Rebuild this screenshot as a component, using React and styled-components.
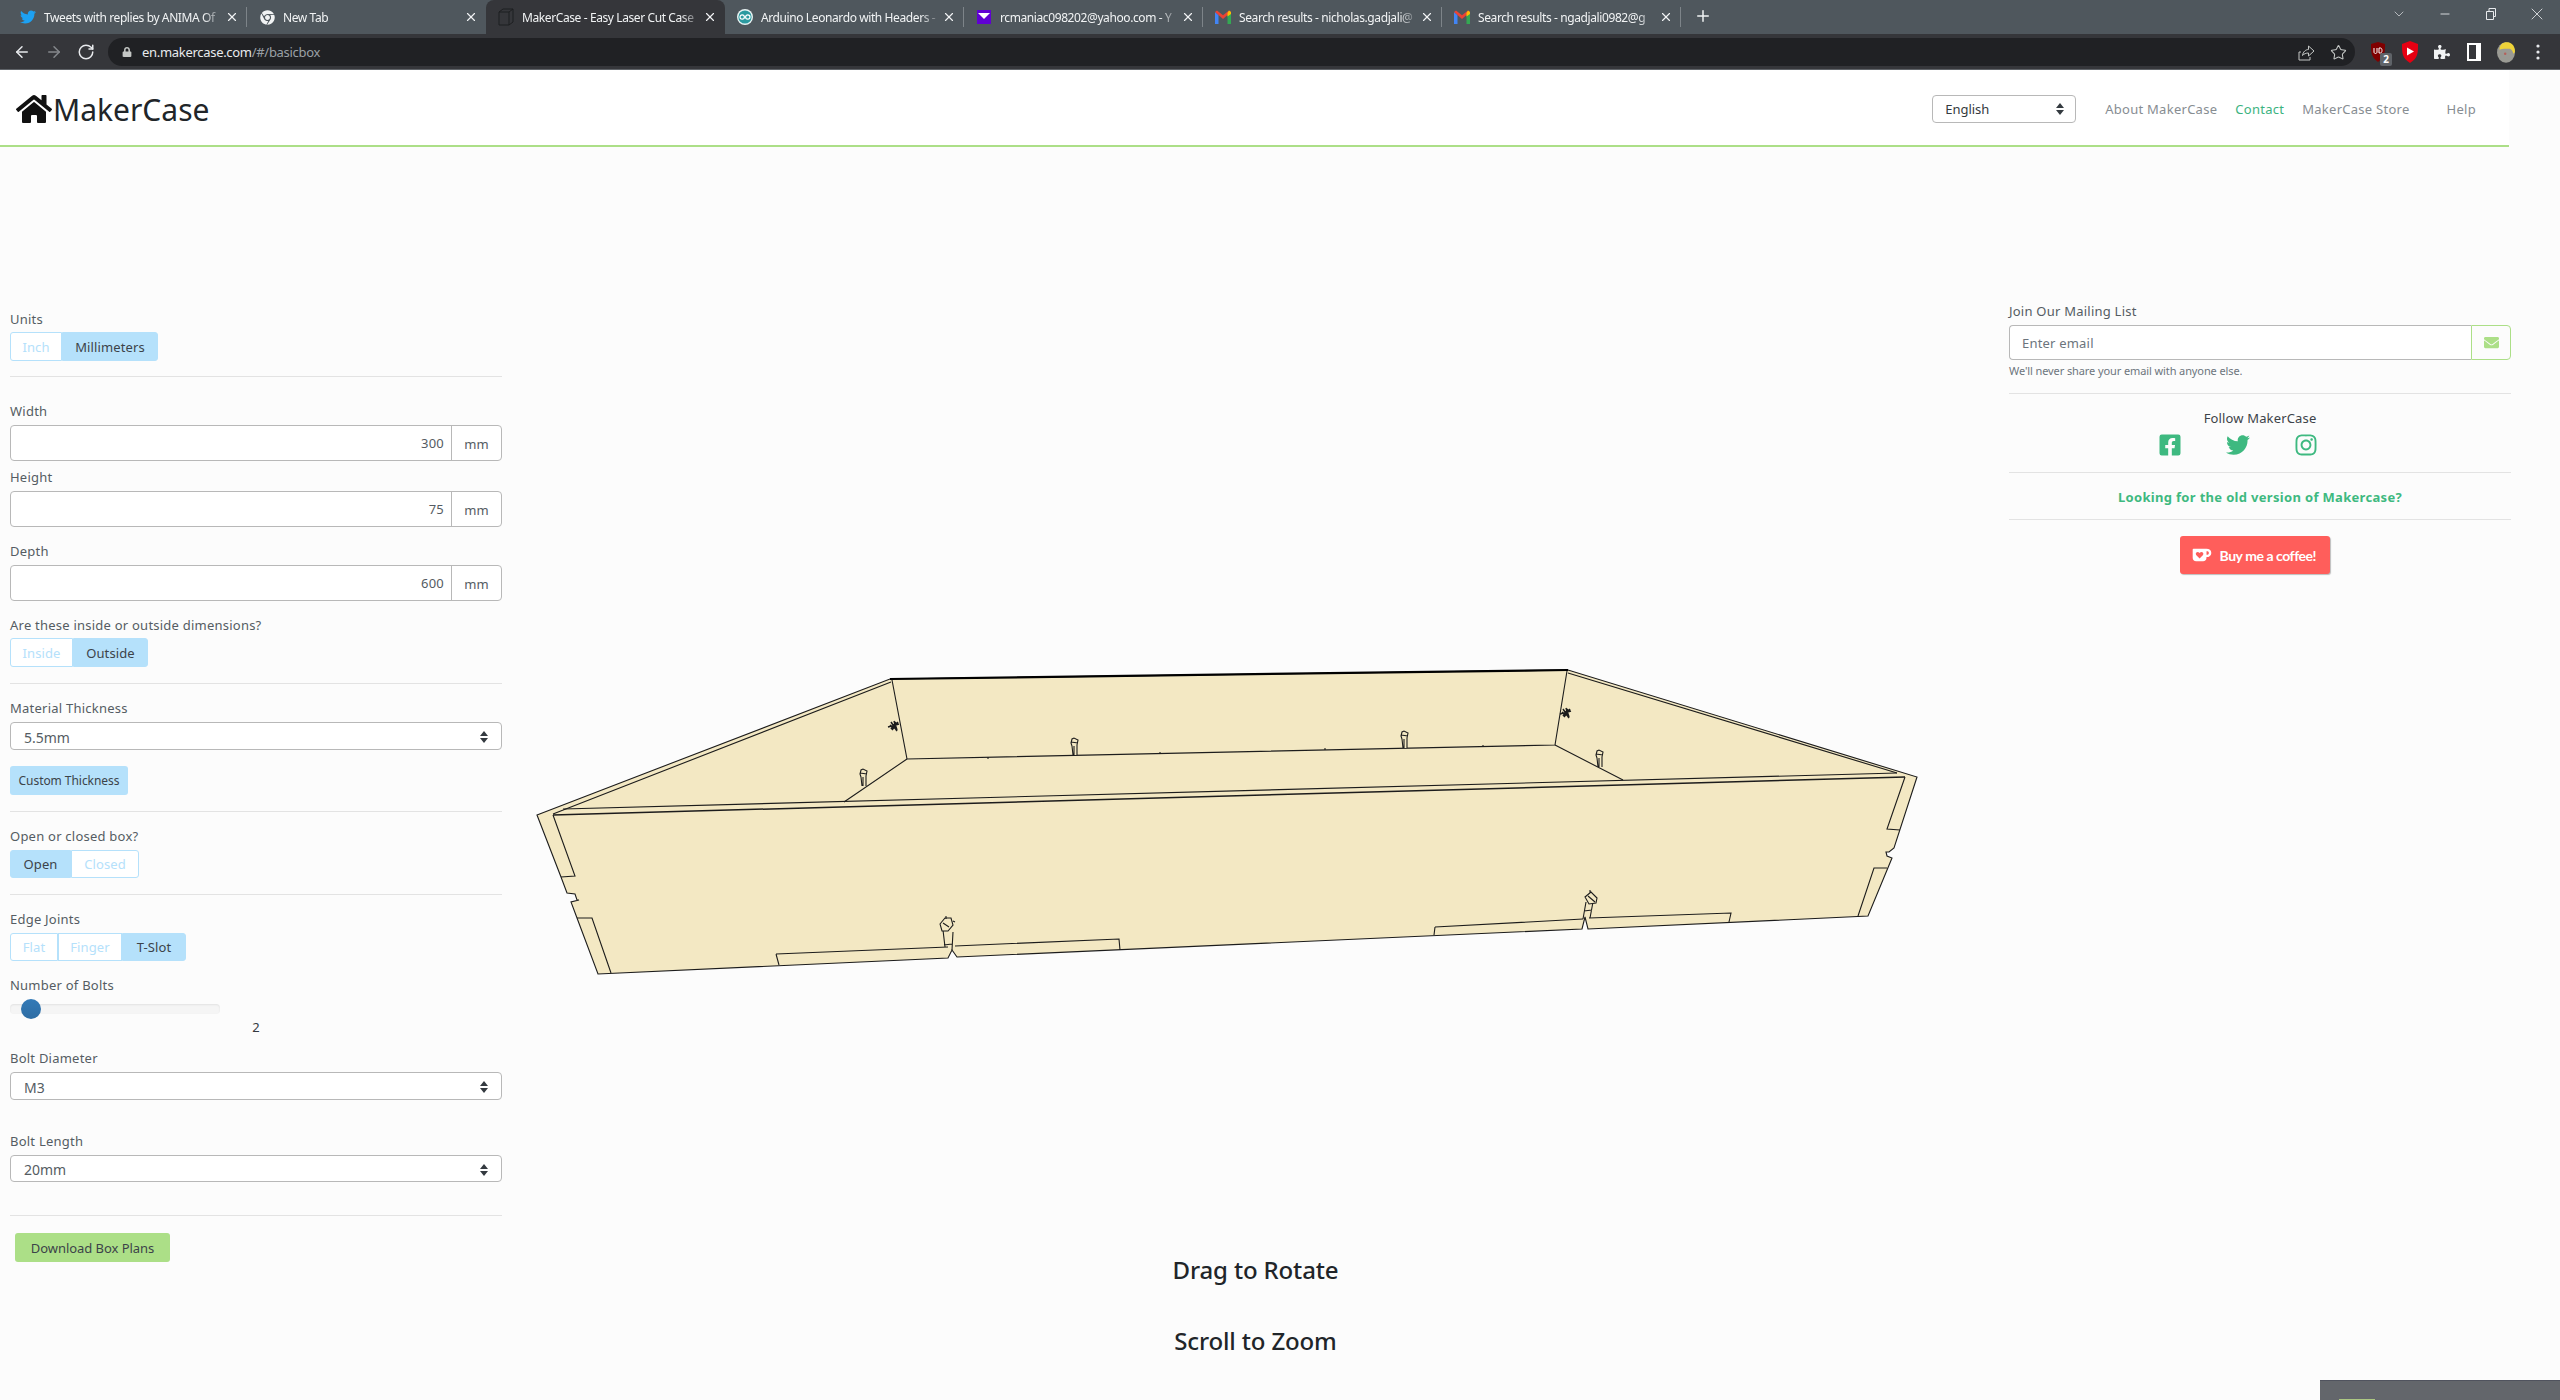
import React from "react";
import styled, { createGlobalStyle } from "styled-components";
import { ArrowLeft, ArrowRight, RotateCw, Star, X, Plus, ChevronDown, Minus } from "lucide-react";
import {
  FaTwitter,
  FaChrome,
  FaLock,
  FaPuzzlePiece,
  FaHome,
  FaFacebookSquare,
  FaInstagram,
  FaEnvelope,
} from "react-icons/fa";

const SANS = `"Noto Sans", "Open Sans", Arial, sans-serif`;

const GlobalStyle = createGlobalStyle`
  html, body {
    margin: 0;
    height: 1400px;
    overflow: hidden;
    background: #fcfcfc;
    font-family: ${SANS};
    color: #212529;
  }
  * { box-sizing: border-box; }
`;

/* browser chrome */

const TabStrip = styled.div`
  display: flex;
  align-items: flex-end;
  height: 34px;
  padding-left: 8px;
  background: #4f575d;
`;

const Tab = styled.div`
  display: flex;
  align-items: center;
  gap: 8px;
  width: 239px;
  height: 34px;
  padding: 0 8px 0 12px;
  border-radius: 8px 8px 0 0;
  background: ${(p) => (p.$active ? "#35363a" : "transparent")};
  position: relative;
  &::after {
    content: "";
    display: ${(p) => (p.$sep ? "block" : "none")};
    position: absolute;
    right: 0;
    top: 7px;
    height: 20px;
    width: 1px;
    background: #7d8489;
  }
`;

const TabIcon = styled.span`
  display: flex;
  align-items: center;
  justify-content: center;
  width: 16px;
  height: 16px;
  flex: none;
`;

const TabTitle = styled.span`
  flex: 1;
  min-width: 0;
  margin-right: -4px;
  overflow: hidden;
  white-space: nowrap;
  font-size: 12px;
  letter-spacing: -0.4px;
  color: #f1f3f4;
  mask-image: linear-gradient(to right, #000 90%, rgba(0, 0, 0, 0.15));
`;

const NewTab = styled.span`
  display: flex;
  align-self: flex-start;
  margin: 7px 0 0 13px;
  color: #f1f3f4;
`;

const WindowControls = styled.div`
  display: flex;
  align-self: flex-start;
  height: 28px;
  margin-left: auto;
  color: #e8eaed;
`;

const WindowButton = styled.span`
  display: flex;
  align-items: center;
  justify-content: center;
  width: 46px;
`;

const Toolbar = styled.div`
  display: flex;
  align-items: center;
  height: 36px;
  padding: 4px 0 3px 13px;
  background: #35363a;
  border-bottom: 1px solid #5f6368;
`;

const NavIcons = styled.div`
  display: flex;
  gap: 14px;
  margin-right: 13px;
  color: #e8eaed;
`;

const Omnibox = styled.div`
  display: flex;
  align-items: center;
  flex: none;
  width: 2247px;
  height: 28px;
  padding: 0 8px 0 14px;
  border-radius: 14px;
  background: #202124;
  font-size: 13px;
  letter-spacing: -0.3px;
  color: #e8eaed;
`;

const UrlHost = styled.span`
  margin-left: 10px;
`;

const UrlPath = styled.span`
  color: #9aa0a6;
`;

const OmniActions = styled.div`
  display: flex;
  align-items: center;
  gap: 15px;
  margin-left: auto;
  color: #c4c7c5;
`;

const Extensions = styled.div`
  display: flex;
  align-items: center;
  gap: 14px;
  padding-left: 14px;
  color: #f1f3f4;
`;

const ExtButton = styled.span`
  display: flex;
  align-items: center;
  justify-content: center;
  width: 18px;
  height: 22px;
  position: relative;
`;

const ExtBadge = styled.span`
  position: absolute;
  right: -5px;
  bottom: -3px;
  width: 12px;
  height: 13px;
  border-radius: 2px;
  background: #5f6368;
  font-size: 10px;
  font-weight: 700;
  line-height: 13px;
  text-align: center;
  color: #fff;
`;

/* page header */

const Header = styled.header`
  display: flex;
  align-items: center;
  width: 2509px;
  height: 77px;
  padding: 2px 33px 0 16px;
  background: #fff;
  border-bottom: 2px solid #acdf87;
`;

const Logo = styled.div`
  display: flex;
  align-items: center;
  gap: 1px;
  font-size: 30px;
  line-height: 40px;
  color: #212529;
`;

const LogoText = styled.span`
  position: relative;
  top: 1px;
`;

const LangSelect = styled.div`
  display: flex;
  align-items: center;
  justify-content: space-between;
  width: 144px;
  height: 28px;
  margin-left: auto;
  padding: 0 10px 0 12px;
  border: 1px solid #b8b8b8;
  border-radius: 4px;
  font-size: 13px;
  color: #343a40;
`;

const NavLinks = styled.nav`
  display: flex;
  gap: 18px;
  margin-left: 29px;
  font-size: 13px;
  letter-spacing: 0.27px;
`;

const NavLink = styled.span`
  margin-left: ${(p) => p.$ml || 0}px;
  color: ${(p) => (p.$green ? "#3cb37f" : "#878d92")};
`;

/* page body */

const Main = styled.main`
  display: grid;
  grid-template-columns: 492px 1507px 502px;
  padding-left: 10px;
`;

const LeftColumn = styled.section`
  padding-top: 163px;
`;

const RightColumn = styled.aside`
  padding-top: 155px;
`;

const Stage = styled.div`
  display: flex;
  flex-direction: column;
  align-items: center;
  padding-top: 503px;
`;

const BoxSvg = styled.svg`
  display: block;
  flex: none;
`;

const Caption = styled.div`
  margin-top: ${(p) => p.$mt}px;
  font-size: 24px;
  font-weight: 500;
  line-height: 30px;
  letter-spacing: -0.15px;
  color: #212529;
`;

const Label = styled.div`
  margin-top: ${(p) => p.$mt || 0}px;
  margin-bottom: ${(p) => p.$mb ?? 5}px;
  height: 18px;
  font-size: 13px;
  line-height: 18px;
  letter-spacing: 0.23px;
  color: #555c63;
`;

const ToggleGroup = styled.div`
  display: flex;
  width: fit-content;
  height: ${(p) => p.$h || 29}px;
`;

const Toggle = styled.div`
  display: flex;
  align-items: center;
  justify-content: center;
  width: ${(p) => p.$w}px;
  font-size: 13px;
  letter-spacing: 0.12px;
  background: ${(p) => (p.$active ? "#b5e1fb" : "#fff")};
  color: ${(p) => (p.$active ? "#3c4349" : "#b5e1fb")};
  border: 1px solid #b5e1fb;
  &:first-child {
    border-radius: 3px 0 0 3px;
  }
  &:last-child {
    border-radius: 0 3px 3px 0;
  }
`;

const Divider = styled.hr`
  margin: ${(p) => p.$mt}px 0 ${(p) => p.$mb || 0}px;
  border: 0;
  border-top: 1px solid #e3e3e3;
`;

const InputGroup = styled.div`
  display: flex;
  height: 36px;
  background: #fff;
  border: 1px solid #b8b8b8;
  border-radius: 4px;
  font-size: 13px;
  color: #555c63;
`;

const NumberValue = styled.div`
  flex: 1;
  padding-right: 7px;
  line-height: 35px;
  letter-spacing: 0.2px;
  text-align: right;
`;

const UnitAddon = styled.div`
  width: 50px;
  border-left: 1px solid #b8b8b8;
  line-height: 36px;
  text-align: center;
`;

const SelectBox = styled.div`
  display: flex;
  align-items: center;
  justify-content: space-between;
  height: ${(p) => p.$h}px;
  padding: 2px 12px 0 13px;
  background: #fff;
  border: 1px solid #b8b8b8;
  border-radius: 4px;
  font-size: 14px;
  color: #555c63;
`;

const ActionButton = styled.div`
  width: ${(p) => p.$w}px;
  height: 29px;
  margin: ${(p) => p.$mt}px 0 0 ${(p) => p.$ml || 0}px;
  border-radius: 3px;
  background: ${(p) => p.$bg};
  font-size: ${(p) => p.$size}px;
  line-height: 30px;
  text-align: center;
  letter-spacing: -0.05px;
  color: #3c4349;
`;

const SliderTrack = styled.div`
  position: relative;
  width: 210px;
  height: 10px;
  margin-top: 10px;
  border-radius: 4px;
  background: #f5f5f5;
  box-shadow: inset 0 1px 2px rgba(0, 0, 0, 0.08);
`;

const SliderHandle = styled.div`
  position: absolute;
  left: 11px;
  top: -5px;
  width: 20px;
  height: 20px;
  border-radius: 50%;
  background: linear-gradient(#337ab7, #2e6da4);
`;

const SliderValue = styled.div`
  height: 18px;
  margin-top: 4px;
  font-size: 13px;
  line-height: 18px;
  text-align: center;
  color: #343a40;
`;

/* right column */

const EmailGroup = styled.div`
  display: flex;
  height: 35px;
`;

const EmailInput = styled.div`
  flex: 1;
  padding-left: 12px;
  background: #fff;
  border: 1px solid #b8b8b8;
  border-right: 0;
  border-radius: 4px 0 0 4px;
  font-size: 13px;
  line-height: 35px;
  letter-spacing: 0.2px;
  color: #6c757d;
`;

const EmailAddon = styled.div`
  display: flex;
  align-items: center;
  justify-content: center;
  width: 40px;
  border: 1px solid #acdf87;
  border-radius: 0 4px 4px 0;
  color: #acdf87;
`;

const Hint = styled.div`
  height: 16px;
  margin-top: 3px;
  font-size: 11px;
  line-height: 16px;
  letter-spacing: -0.1px;
  color: #6c757d;
`;

const CenterTitle = styled.div`
  margin-top: 15px;
  height: 18px;
  font-size: 13px;
  line-height: 18px;
  letter-spacing: 0.15px;
  text-align: center;
  color: #3c4349;
`;

const SocialRow = styled.div`
  display: flex;
  justify-content: center;
  align-items: center;
  gap: 44px;
  height: 24px;
  margin: 6px 44px 0 0;
  color: #3eb980;
`;

const OldVersion = styled.div`
  height: 18px;
  margin-top: 15px;
  font-size: 13px;
  font-weight: 700;
  line-height: 18px;
  letter-spacing: 0.32px;
  text-align: center;
  color: #3eb980;
`;

const CoffeeWrap = styled.div`
  display: flex;
  justify-content: center;
  margin: 16px 0 0 -11px;
`;

const CoffeeButton = styled.div`
  display: flex;
  align-items: center;
  gap: 8px;
  width: 150px;
  height: 38px;
  padding-left: 12px;
  border-radius: 3px;
  background: #ff5e5b;
  box-shadow: 1px 1px 1px rgba(0, 0, 0, 0.25);
  font-family: Lato, ${SANS};
  font-size: 14px;
  font-weight: 700;
  letter-spacing: -0.45px;
  color: #fff;
`;

const DockedBar = styled.div`
  position: fixed;
  right: 0;
  bottom: 0;
  width: 240px;
  height: 20px;
  padding: 18px 0 0 19px;
  overflow: hidden;
  background: #63666b;
  border-top: 1px solid #50535e;
`;

const DockedMark = styled.div`
  width: 36px;
  height: 2px;
  background: #acc783;
`;

/* small drawings */

const SelectArrows = () => (
  <svg width="10" height="14" viewBox="0 0 10 14">
    <path d="M5 1 9 6H1zM5 13 1 8h8z" fill="#343a40" />
  </svg>
);

const MakerCaseFavicon = () => (
  <svg width="16" height="18" viewBox="0 0 16 18" fill="none" stroke="#1d1e20" strokeWidth="1">
    <path d="M1 4 5 1h10v13l-4 3H1zM1 4h10v13M11 4l4-3" />
  </svg>
);

const ArduinoIcon = () => (
  <svg width="16" height="16" viewBox="0 0 16 16">
    <circle cx="8" cy="8" r="8" fill="#e8f3f3" />
    <circle cx="8" cy="8" r="6.6" fill="#2c9aa0" />
    <circle cx="5.2" cy="8" r="2.2" fill="none" stroke="#fff" strokeWidth="1.2" />
    <circle cx="10.8" cy="8" r="2.2" fill="none" stroke="#fff" strokeWidth="1.2" />
  </svg>
);

const YahooMailIcon = () => (
  <svg width="14" height="14" viewBox="0 0 14 14">
    <rect width="14" height="14" fill="#6001d2" />
    <path d="M1 3h12L7 9z" fill="#fff" />
  </svg>
);

const GmailIcon = () => (
  <svg width="16" height="14" viewBox="0 0 16 14">
    <path d="M0 2v12h3.5V5z" fill="#4285f4" />
    <path d="M12.5 5v9H16V2z" fill="#34a853" />
    <path d="M0 2 2 .5l6 4.7L14 .5 16 2l-3.5 3L8 9 3.5 5z" fill="#ea4335" />
    <path d="M12.5 3 14 .5 16 2v2l-3.5 2.5z" fill="#fbbc04" />
  </svg>
);

const ShareIcon = () => (
  <svg width="17" height="17" viewBox="0 0 17 17" fill="none" stroke="currentColor" strokeWidth="1">
    <path d="M3 8H1v8h11v-3" />
    <path d="M4.5 11.5C5 7.5 8 5.5 10.5 5.5V2l5.5 5-5.5 5V9C8 9 6 9.8 4.5 11.5z" />
  </svg>
);

const UBlockIcon = () => (
  <svg width="16" height="20" viewBox="0 0 16 20">
    <path d="M8 0 15 2c0 8 0 13-7 18C1 15 1 10 1 2z" fill="#800000" />
    <path d="M4 6v4c0 2 3 2 3 0V6M9 6h1.5c2 0 2 5 0 5H9z" fill="none" stroke="#fff" strokeWidth="1" />
  </svg>
);

const YouTubeShieldIcon = () => (
  <svg width="18" height="22" viewBox="0 0 18 22">
    <path d="M9 0 17 3c0 9 0 14-8 19C1 17 1 12 1 3z" fill="#e60012" />
    <path d="M6 6.5 13 10.5 6 14.5z" fill="#fff" />
  </svg>
);

const SidePanelIcon = () => (
  <svg width="14" height="18" viewBox="0 0 14 18">
    <rect width="14" height="18" fill="#fff" />
    <rect x="2" y="2" width="7" height="14" fill="#35363a" />
  </svg>
);

const Avatar = () => (
  <svg width="22" height="25" viewBox="0 0 22 25">
    <ellipse cx="11" cy="12.5" rx="11" ry="12.5" fill="#9a9a94" />
    <path d="M3 9C3 3 7 0 12 0c5 0 10 3 10 12l-2 2c-1-4-3-6-5-6-4 0-8 0-12 1z" fill="#eed339" />
    <circle cx="10" cy="14" r="1.5" fill="#b5605a" />
  </svg>
);

const KofiCup = () => (
  <svg width="20" height="14" viewBox="0 0 29 20">
    <path d="M2 1h19c4 0 7 2 7 6s-3 6-7 6v1c0 3-2 5-5 5H6c-3 0-5-2-5-5V2c0-.5.5-1 1-1z" fill="#fff" />
    <path d="M21 4.5c2 0 3.5.5 3.5 2.5S23 9.5 21 9.5z" fill="#ff5e5b" />
    <path d="M11 15 6 10c-2-3 2-6 5-3 3-3 7 0 5 3z" fill="#ff5e5b" />
  </svg>
);

const boltPath = "M-2 0-3-9-4-12-3-16-1-17 3-15 2-10 2 0M-4-13 3-12M-1 0-1-9";

const Bolt = ({ x, y }) => (
  <path d={boltPath} transform={`translate(${x} ${y})`} fill="#f3e8c3" />
);

const Scribble = ({ x, y }) => (
  <path
    transform={`translate(${x} ${y})`}
    d="M-6 1 5-2M-3-4 3 5M-2 4 4-4M-4-1l6 4M0-5l3 9M-3 3l5-7"
    strokeWidth="1.5"
  />
);

const BoxDrawing = () => (
  <BoxSvg
    width="1507"
    height="350"
    viewBox="502 650 1507 350"
    fill="none"
    stroke="#1c1c1c"
    strokeWidth="1.1"
  >
    <path
      d="M537 815 890 679 1568 670 1917 777 1894 848 1889 852 1886 852 1887 856 1892 858 1868 916 1588 929 1585 917 1582 929 957 957 952 950 948 958 598 974 577 918 571 902 579 900 577 900 575 894 567 893 561 877z"
      fill="#f3e8c3"
    />
    {/* back wall */}
    <path d="M890 679 1568 670" strokeWidth="2.2" stroke="#000" />
    <path d="M892 680 907 759 1555 745 1567 671" />
    <path d="M907 759 844 802M1555 745 1623 780" />
    <path d="M988 757v2M1160 752v2M1325 748v2M1483 745v2" />
    {/* rims of the side walls */}
    <path d="M553 814 891 682M1568 673 1897 773" />
    {/* front panel */}
    <path d="M563 809 1897 773" />
    <path d="M553 815 1905 777" strokeWidth="1.5" />
    {/* tabs at the left and right edges */}
    <path d="M553 815 575 876 561 877M577 918 592 918 611 973" />
    <path d="M1905 777 1887 829 1900 830M1887 868 1874 868 1858 916" />
    {/* tabs on the bottom edge */}
    <path d="M776 954 779 965M776 954 948 947M955 946 1119 939 1120 950" />
    <path d="M1435 927 1434 935M1435 927 1583 919M1589 918 1731 913 1729 922" />
    {/* bolts */}
    <path d="M945 947 943 930M952 950 953 932M944 945 952 944" />
    <path d="M940 924 945 918 951 918 953 925 948 931 942 931zM943 923 949 927M946 916v3M953 921l2 1" fill="#f3e8c3" />
    <path d="M1583 919 1586 902M1590 918 1593 902M1584 911 1592 910" />
    <path d="M1585 897 1591 892 1597 898 1596 903 1589 904zM1588 896 1595 902M1590 890v3" fill="#f3e8c3" />
    <Bolt x={1075} y={755} />
    <Bolt x={1405} y={748} />
    <Bolt x={864} y={786} />
    <Bolt x={1600} y={767} />
    <Scribble x={894} y={726} />
    <Scribble x={1566} y={713} />
  </BoxSvg>
);

const tabs = [
  { title: "Tweets with replies by ANIMA Of", icon: <FaTwitter size={16} color="#1da1f2" />, sep: true },
  { title: "New Tab", icon: <FaChrome size={15} color="#f1f3f4" /> },
  { title: "MakerCase - Easy Laser Cut Case", icon: <MakerCaseFavicon />, active: true },
  { title: "Arduino Leonardo with Headers -", icon: <ArduinoIcon />, sep: true },
  { title: "rcmaniac098202@yahoo.com - Y", icon: <YahooMailIcon />, sep: true },
  { title: "Search results - nicholas.gadjali@", icon: <GmailIcon />, sep: true },
  { title: "Search results - ngadjali0982@g", icon: <GmailIcon />, sep: true },
];

const NumberField = ({ label, value, mt }) => (
  <>
    <Label $mt={mt}>{label}</Label>
    <InputGroup>
      <NumberValue>{value}</NumberValue>
      <UnitAddon>mm</UnitAddon>
    </InputGroup>
  </>
);

const SelectField = ({ label, value, mt, h }) => (
  <>
    <Label $mt={mt}>{label}</Label>
    <SelectBox $h={h}>
      {value}
      <SelectArrows />
    </SelectBox>
  </>
);

const App = () => {
  return (
    <>
      <GlobalStyle />
      <TabStrip>
        {tabs.map((t) => (
          <Tab key={t.title} $active={t.active} $sep={t.sep}>
            <TabIcon>{t.icon}</TabIcon>
            <TabTitle>{t.title}</TabTitle>
            <X size={14} color="#f1f3f4" strokeWidth={2} />
          </Tab>
        ))}
        <NewTab>
          <Plus size={18} strokeWidth={2} />
        </NewTab>
        <WindowControls>
          <WindowButton>
            <ChevronDown size={16} strokeWidth={1} />
          </WindowButton>
          <WindowButton>
            <Minus size={14} strokeWidth={1.5} />
          </WindowButton>
          <WindowButton>
            <svg width="14" height="14" viewBox="0 0 14 14" fill="none" stroke="currentColor">
              <path d="M2.5 4.5h7v8h-7zM5 4.5V1.5h6.5v8h-2" />
            </svg>
          </WindowButton>
          <WindowButton>
            <X size={20} strokeWidth={1} />
          </WindowButton>
        </WindowControls>
      </TabStrip>
      <Toolbar>
        <NavIcons>
          <ArrowLeft size={18} strokeWidth={2} />
          <ArrowRight size={18} strokeWidth={2} color="#85888c" />
          <RotateCw size={18} strokeWidth={2} />
        </NavIcons>
        <Omnibox>
          <FaLock size={10} color="#c4c7c5" />
          <UrlHost>en.makercase.com</UrlHost>
          <UrlPath>/#/basicbox</UrlPath>
          <OmniActions>
            <ShareIcon />
            <Star size={17} strokeWidth={1.5} />
          </OmniActions>
        </Omnibox>
        <Extensions>
          <ExtButton>
            <UBlockIcon />
            <ExtBadge>2</ExtBadge>
          </ExtButton>
          <ExtButton>
            <YouTubeShieldIcon />
          </ExtButton>
          <ExtButton>
            <FaPuzzlePiece size={16} />
          </ExtButton>
          <ExtButton>
            <SidePanelIcon />
          </ExtButton>
          <ExtButton>
            <Avatar />
          </ExtButton>
          <ExtButton>
            <svg width="4" height="16" viewBox="0 0 4 16" fill="#e8eaed">
              <circle cx="2" cy="2" r="1.6" />
              <circle cx="2" cy="8" r="1.6" />
              <circle cx="2" cy="14" r="1.6" />
            </svg>
          </ExtButton>
        </Extensions>
      </Toolbar>

      <Header>
        <Logo>
          <FaHome size={36} color="#111" />
          <LogoText>MakerCase</LogoText>
        </Logo>
        <LangSelect>
          English
          <SelectArrows />
        </LangSelect>
        <NavLinks>
          <NavLink>About MakerCase</NavLink>
          <NavLink $green>Contact</NavLink>
          <NavLink>MakerCase Store</NavLink>
          <NavLink $ml={19}>Help</NavLink>
        </NavLinks>
      </Header>

      <Main>
        <LeftColumn>
          <Label $mb={4}>Units</Label>
          <ToggleGroup>
            <Toggle $w={52}>Inch</Toggle>
            <Toggle $w={96} $active>
              Millimeters
            </Toggle>
          </ToggleGroup>
          <Divider $mt={15} />
          <NumberField label="Width" value="300" mt={25} />
          <NumberField label="Height" value="75" mt={7} />
          <NumberField label="Depth" value="600" mt={15} />
          <Label $mt={15} $mb={4}>
            Are these inside or outside dimensions?
          </Label>
          <ToggleGroup>
            <Toggle $w={63}>Inside</Toggle>
            <Toggle $w={75} $active>
              Outside
            </Toggle>
          </ToggleGroup>
          <Divider $mt={16} />
          <SelectField label="Material Thickness" value="5.5mm" mt={15} h={28} />
          <ActionButton $w={118} $mt={16} $bg="#b5e1fb" $size={12}>
            Custom Thickness
          </ActionButton>
          <Divider $mt={16} />
          <Label $mt={15}>Open or closed box?</Label>
          <ToggleGroup $h={28}>
            <Toggle $w={61} $active>
              Open
            </Toggle>
            <Toggle $w={68}>Closed</Toggle>
          </ToggleGroup>
          <Divider $mt={16} />
          <Label $mt={15}>Edge Joints</Label>
          <ToggleGroup $h={28}>
            <Toggle $w={48}>Flat</Toggle>
            <Toggle $w={64}>Finger</Toggle>
            <Toggle $w={64} $active>
              T-Slot
            </Toggle>
          </ToggleGroup>
          <Label $mt={15} $mb={0}>
            Number of Bolts
          </Label>
          <SliderTrack>
            <SliderHandle />
          </SliderTrack>
          <SliderValue>2</SliderValue>
          <SelectField label="Bolt Diameter" value="M3" mt={13} h={28} />
          <SelectField label="Bolt Length" value="20mm" mt={32} h={27} />
          <Divider $mt={33} />
          <ActionButton $w={155} $mt={17} $ml={5} $bg="#acdf87" $size={13}>
            Download Box Plans
          </ActionButton>
        </LeftColumn>

        <Stage>
          <BoxDrawing />
          <Caption $mt={255}>Drag to Rotate</Caption>
          <Caption $mt={41}>Scroll to Zoom</Caption>
        </Stage>

        <RightColumn>
          <Label>Join Our Mailing List</Label>
          <EmailGroup>
            <EmailInput>Enter email</EmailInput>
            <EmailAddon>
              <FaEnvelope size={15} />
            </EmailAddon>
          </EmailGroup>
          <Hint>We'll never share your email with anyone else.</Hint>
          <Divider $mt={14} />
          <CenterTitle>Follow MakerCase</CenterTitle>
          <SocialRow>
            <FaFacebookSquare size={24} />
            <FaTwitter size={24} />
            <FaInstagram size={24} />
          </SocialRow>
          <Divider $mt={15} />
          <OldVersion>Looking for the old version of Makercase?</OldVersion>
          <Divider $mt={13} />
          <CoffeeWrap>
            <CoffeeButton>
              <KofiCup />
              Buy me a coffee!
            </CoffeeButton>
          </CoffeeWrap>
        </RightColumn>
      </Main>
      <DockedBar>
        <DockedMark />
      </DockedBar>
    </>
  );
};

export default App;
